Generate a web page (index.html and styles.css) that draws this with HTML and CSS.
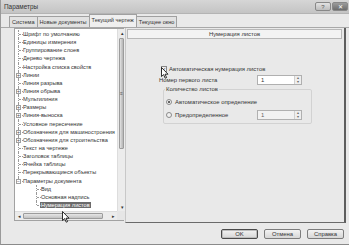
FILE: index.html
```html
<!DOCTYPE html>
<html lang="ru">
<head>
    <meta charset="UTF-8">
    <title>Параметры</title>
    <link rel="stylesheet" href="styles.css">
</head>
<body>
<div class="window">
    <div class="titlebar">
        <span>Параметры</span>
        <div class="tb-btns">
            <span class="tb-btn">?</span>
            <span class="tb-btn close">✕</span>
        </div>
    </div>

    <div class="tabs">
        <div class="tab">Система</div>
        <div class="tab">Новые документы</div>
        <div class="tab active">Текущий чертеж</div>
        <div class="tab">Текущее окно</div>
    </div>

    <div class="page">
        <div class="tree-box">
            <ul class="tree">
                <li>Шрифт по умолчанию</li>
                <li>Единицы измерения</li>
                <li>Группирование слоев</li>
                <li>Дерево чертежа</li>
                <li>Настройка списка свойств</li>
                <li><span class="exp">+</span>Линии</li>
                <li>Линия разрыва</li>
                <li><span class="exp">+</span>Линия обрыва</li>
                <li>Мультилиния</li>
                <li><span class="exp">+</span>Размеры</li>
                <li><span class="exp">+</span>Линия-выноска</li>
                <li>Условное пересечение</li>
                <li><span class="exp">+</span>Обозначения для машиностроения</li>
                <li><span class="exp">+</span>Обозначения для строительства</li>
                <li>Текст на чертеже</li>
                <li>Заголовок таблицы</li>
                <li>Ячейка таблицы</li>
                <li>Перекрывающиеся объекты</li>
                <li class="last"><span class="exp">−</span>Параметры документа
                    <ul>
                        <li>Вид</li>
                        <li>Основная надпись</li>
                        <li class="last"><span class="sel">Нумерация листов</span></li>
                    </ul>
                </li>
            </ul>
            <div class="vscroll">
                <span class="sb-btn">▴</span>
                <div class="v-track"><div class="v-thumb"><span class="grip">≡</span></div></div>
                <span class="sb-btn">▾</span>
            </div>
            <div class="hscroll">
                <span class="sb-btn">◂</span>
                <div class="h-track"><div class="h-thumb"><span class="grip">⦙</span></div></div>
                <span class="sb-btn">▸</span>
            </div>
            <div class="corner"></div>
            <svg class="cursor cur-tree" width="8" height="12" viewBox="0 0 8 12"><path d="M0.5 0.5 L0.5 9.5 L2.6 7.6 L4.2 11.2 L5.6 10.6 L4 7.2 L7 7.2 Z" fill="#fff" stroke="#000" stroke-width="0.8"/></svg>
        </div>

        <div class="panel">
            <div class="panel-head">Нумерация листов</div>
            <div class="panel-body">
                <label class="check-row"><span class="checkbox">✓</span>Автоматическая нумерация листов</label>
                <div class="field-row">
                    <span>Номер первого листа</span>
                    <div class="spin"><span class="spin-val">1</span><span class="spin-btns"><i>▴</i><i>▾</i></span></div>
                </div>
                <fieldset class="group">
                    <legend>Количество листов</legend>
                    <div class="radio-row"><span class="radio on"></span>Автоматическое определение</div>
                    <div class="radio-row">
                        <span class="radio"></span><span class="radio-label">Предопределенное</span>
                        <div class="spin disabled"><span class="spin-val">1</span><span class="spin-btns"><i>▴</i><i>▾</i></span></div>
                    </div>
                </fieldset>
                <svg class="cursor cur-check" width="8" height="12" viewBox="0 0 8 12"><path d="M0.5 0.5 L0.5 9.5 L2.6 7.6 L4.2 11.2 L5.6 10.6 L4 7.2 L7 7.2 Z" fill="#fff" stroke="#000" stroke-width="0.8"/></svg>
            </div>
        </div>
    </div>

    <div class="footer">
        <button class="btn default">OK</button>
        <button class="btn">Отмена</button>
        <button class="btn">Справка</button>
    </div>
</div>
</body>
</html>
```

FILE: styles.css
```css
* {
    box-sizing: border-box;
}
body {
    margin: 0;
    font-family: "Liberation Sans", Arial, sans-serif;
    font-size: 5.9px;
    color: #333;
    background: #e8e8e8;
}
.window {
    width: 349px;
    height: 245px;
    display: flex;
    flex-direction: column;
    background: #e9e9e9;
    border-left: 1px solid #9a9a9a;
    border-bottom: 1px solid #8a8a8a;
}
.titlebar {
    height: 14px;
    flex: none;
    display: flex;
    align-items: center;
    justify-content: space-between;
    padding: 0 1px 0 3px;
    background: linear-gradient(#d6d6d6, #c4c4c4);
    color: #333;
    font-size: 6.4px;
    border-bottom: 1px solid #b4b4b4;
}
.tb-btns {
    display: flex;
    gap: 1px;
}
.tb-btn {
    width: 16px;
    height: 9px;
    border: 1px solid #888;
    border-radius: 2px;
    background: linear-gradient(#e2e2e2, #bdbdbd);
    display: flex;
    align-items: center;
    justify-content: center;
    font-size: 6px;
    color: #555;
}
.tb-btn.close {
    background: linear-gradient(#9c9c9c, #6c6c6c);
    color: #fff;
}

/* вкладки */
.tabs {
    height: 13px;
    flex: none;
    display: flex;
    align-items: flex-end;
    padding-left: 8px;
    font-size: 5.6px;
}
.tab {
    height: 11px;
    padding: 0 2px;
    line-height: 10px;
    border: 1px solid #a0a0a0;
    border-bottom: none;
    background: #e2e2e2;
    margin-right: -1px;
    white-space: nowrap;
}
.tab.active {
    height: 13px;
    line-height: 11px;
    background: #efefef;
    position: relative;
    z-index: 1;
}

.page {
    height: 196px;
    flex: none;
    display: flex;
    padding-left: 13px;
    border-top: 1px solid #a8a8a8;
}

/* дерево */
.tree-box {
    width: 110px;
    height: 193px;
    background: #fff;
    border: 1px solid #a2a2a2;
    display: grid;
    grid-template-columns: 1fr 8px;
    grid-template-rows: 1fr 9px;
    position: relative;
}
.tree {
    list-style: none;
    margin: 0;
    padding: 1px 0 0 0;
    overflow: hidden;
    white-space: nowrap;
    font-size: 5.6px;
}
.tree ul {
    list-style: none;
    margin: 0;
    padding: 0 0 0 10px;
}
.tree li {
    position: relative;
    padding-left: 8px;
    line-height: 8.14px;
}
.tree li::before {
    content: "";
    position: absolute;
    left: 3px;
    top: 0;
    height: 100%;
    border-left: 1px dotted #999;
}
.tree li.last::before {
    height: 4px;
}
.tree li::after {
    content: "";
    position: absolute;
    left: 4px;
    top: 4px;
    width: 4px;
    border-top: 1px dotted #999;
}
.exp {
    position: absolute;
    left: 1px;
    top: 2px;
    width: 5px;
    height: 5px;
    border: 1px solid #a0a0a0;
    background: #fff;
    font-size: 5px;
    line-height: 3px;
    text-align: center;
    color: #444;
    z-index: 1;
}
.sel {
    background: #6a6a6a;
    color: #fff;
    padding: 0 1px;
    margin-left: -1px;
}

/* полосы прокрутки */
.vscroll {
    display: flex;
    flex-direction: column;
    background: #ececec;
    border-left: 1px solid #ddd;
}
.hscroll {
    display: flex;
    background: #ececec;
    border-top: 1px solid #ddd;
}
.corner {
    background: #e6e6e6;
}
.sb-btn {
    flex: none;
    width: 8px;
    height: 8px;
    font-size: 5px;
    line-height: 8px;
    text-align: center;
    color: #333;
}
.v-track {
    flex: 1;
    padding: 1px 0;
}
.v-thumb {
    height: 111px;
    margin: 0 1px;
    border: 1px solid #9c9c9c;
    border-radius: 1px;
    background: linear-gradient(90deg, #e4e4e4, #c4c4c4 60%, #b8b8b8);
    display: flex;
    align-items: center;
    justify-content: center;
}
.h-track {
    flex: 1;
    padding: 1px 6px 1px 0;
}
.h-thumb {
    height: 100%;
    width: 80px;
    border: 1px solid #9c9c9c;
    border-radius: 1px;
    background: linear-gradient(#e6e6e6, #c2c2c2);
    display: flex;
    align-items: center;
    justify-content: center;
}
.grip {
    font-size: 5px;
    line-height: 5px;
    color: #555;
}
.cursor {
    position: absolute;
}
.cur-tree {
    left: 47px;
    top: 182px;
}

/* правая панель */
.panel {
    width: 221px;
    margin-left: 1px;
    height: 195px;
    border-left: 1px solid #c8c8c8;
    border-right: 2px solid #5e5e5e;
    border-bottom: 1px solid #6a6a6a;
    display: flex;
    flex-direction: column;
}
.panel-head {
    height: 10px;
    margin: 1px 2px 0 1px;
    background: #f3f3f3;
    border: 1px solid #b8b8b8;
    text-align: center;
    line-height: 8px;
}
.panel-body {
    position: relative;
    padding: 26px 0 0 33px;
}
.check-row {
    display: flex;
    align-items: center;
    padding-left: 2px;
    height: 7px;
}
.checkbox {
    width: 6px;
    height: 6px;
    border: 1px solid #888;
    background: #f2f2f2;
    font-size: 5px;
    line-height: 4px;
    text-align: center;
    margin-right: 2px;
    color: #333;
}
.field-row {
    display: flex;
    align-items: center;
    justify-content: space-between;
    width: 143px;
    margin-top: 3px;
}
.spin {
    width: 45px;
    height: 10px;
    border: 1px solid #b0b0b0;
    background: #fff;
    display: flex;
    justify-content: space-between;
    align-items: center;
}
.spin-val {
    padding-left: 3px;
}
.spin-btns {
    display: flex;
    flex-direction: column;
    width: 7px;
    height: 100%;
    border-left: 1px solid #d0d0d0;
    background: #eee;
}
.spin-btns i {
    flex: 1;
    font-style: normal;
    font-size: 4px;
    line-height: 4px;
    text-align: center;
    color: #666;
}
.spin.disabled {
    background: #f2f2f2;
    color: #666;
}
.group {
    margin: 1px 0 0 4px;
    width: 149px;
    border: 1px solid #d2d2d2;
    border-radius: 2px;
    padding: 3px 0 3px 2px;
}
.group legend {
    padding: 0 1px;
    margin-left: -1px;
}
.radio-row {
    display: flex;
    align-items: center;
    height: 10px;
    margin-top: 2px;
}
.radio-row + .radio-row {
    margin-top: 3px;
}
.radio {
    width: 6px;
    height: 6px;
    border: 1px solid #8a8a8a;
    border-radius: 50%;
    background: #f0f0f0;
    margin-right: 3px;
    display: flex;
    align-items: center;
    justify-content: center;
}
.radio.on::after {
    content: "";
    width: 2px;
    height: 2px;
    border-radius: 50%;
    background: #333;
}
.radio-label {
    width: 82px;
}
.cur-check {
    left: 35px;
    top: 28px;
}

/* кнопки */
.footer {
    flex: 1;
    display: flex;
    justify-content: flex-end;
    align-items: flex-start;
    gap: 6px;
    padding: 6px 5px 0 0;
}
.btn {
    width: 37px;
    height: 10px;
    padding: 0;
    font-family: inherit;
    font-size: 5.9px;
    color: #333;
    border: 1px solid #7c7c7c;
    border-radius: 2px;
    background: linear-gradient(#f2f2f2, #d6d6d6);
}
.btn.default {
    border-color: #4a4a4a;
    box-shadow: inset 0 0 0 1px #bdbdbd;
}
```
